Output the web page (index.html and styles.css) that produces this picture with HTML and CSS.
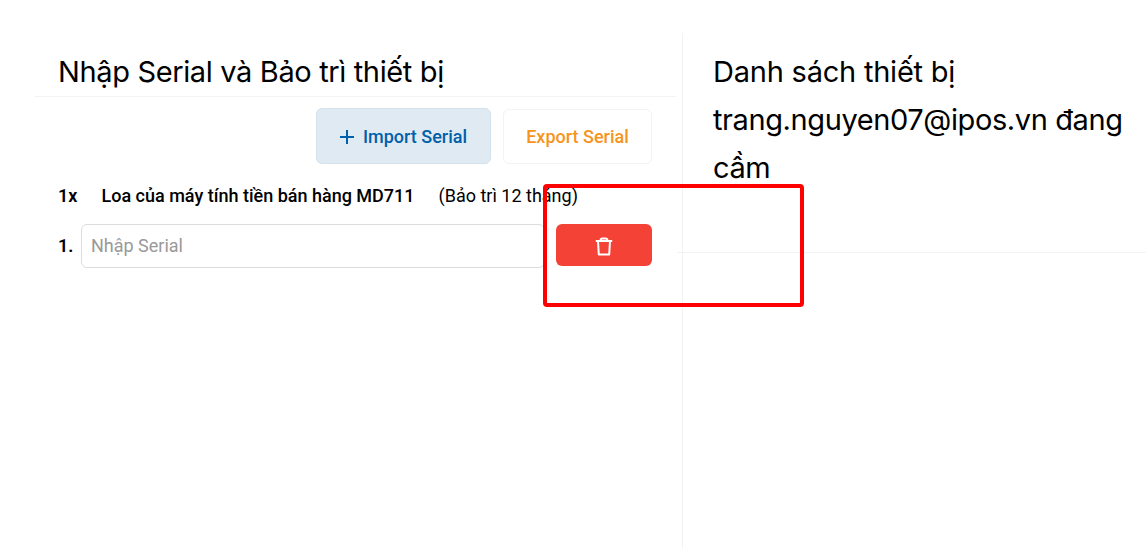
FILE: index.html
```html
<!DOCTYPE html>
<html lang="vi">
<head>
    <meta charset="UTF-8">
    <meta name="viewport" content="width=device-width, initial-scale=1.0">
    <title>Nhập Serial và Bảo trì thiết bị</title>
    <link rel="stylesheet" href="styles.css">
</head>
<body>

    <div class="page">
        <main class="serial-panel">
            <h1 class="title">Nhập Serial và Bảo trì thiết bị</h1>

            <div class="panel-body">
                <div class="actions">
                    <button class="btn btn-import">
                        <svg width="14" height="16" viewBox="0 0 14 16" fill="none" stroke="currentColor" stroke-width="2">
                            <path d="M7 2v14M0 9h14"/>
                        </svg>
                        Import Serial
                    </button>
                    <button class="btn btn-export">Export Serial</button>
                </div>

                <div class="product">
                    <b class="qty">1x</b>
                    <b class="name">Loa của máy tính tiền bán hàng MD711</b>
                    <span class="note">(Bảo trì 12 tháng)</span>
                </div>

                <div class="serial-row">
                    <b class="index">1.</b>
                    <input class="serial-input" type="text" placeholder="Nhập Serial">
                    <button class="btn-delete" aria-label="Xóa">
                        <svg width="18" height="20" viewBox="0 0 18 20" fill="none" stroke="currentColor" stroke-width="2" stroke-linejoin="round">
                            <path d="M.8 5h16.4M3 5l.8 13.5h10.4L15 5M5.6 5V4.2Q5.6 2.4 7.4 2.4h3.2q1.8 0 1.8 1.8V5"/>
                        </svg>
                    </button>
                </div>
            </div>
        </main>

        <aside class="device-panel">
            <h2 class="title device-title">
                <span class="line-1">Danh sách thiết bị</span><br>
                <span class="line-2">trang.nguyen07@ipos.vn đang</span><br>
                <span class="line-3">cầm</span>
            </h2>
        </aside>
    </div>

    <div class="highlight"></div>

</body>
</html>
```
FILE: styles.css
```css
* {
    box-sizing: border-box;
}
body {
    margin: 0;
    background: #fff;
    color: #000;
    font-family: Roboto, "Liberation Sans", sans-serif;
    font-size: 18px;
    height: 548px;
    overflow: hidden;
}
.page {
    display: flex;
    height: 548px;
    padding: 33px 0 0 35px;
}
.serial-panel {
    width: 648px;
    padding-right: 6px;
    border-right: 1px solid #f2f2f2;
}
.title {
    margin: 0;
    font-family: Inter, "Open Sans", sans-serif;
    font-size: 29px;
    font-weight: 400;
    line-height: 48px;
    white-space: nowrap;
}
.serial-panel .title {
    height: 64px;
    padding: 15px 0 0 23px;
    border-bottom: 1px solid #f3f3f3;
    letter-spacing: -0.36px;
}
.panel-body {
    padding: 11px 24px 0 23px;
}
.actions {
    display: flex;
    justify-content: flex-end;
    align-items: center;
    gap: 12px;
}
.btn {
    display: flex;
    align-items: center;
    justify-content: center;
    padding: 0;
    font-family: inherit;
    font-size: 18px;
    font-weight: 500;
    background: #fff;
    border-radius: 6px;
}
.btn-import {
    width: 175px;
    height: 56px;
    gap: 9px;
    color: #0060a9;
    background: #e0eaf3;
    border: 1px solid #d3e1ec;
}
.btn-export {
    width: 149px;
    height: 55px;
    color: #f7941d;
    border: 1px solid #f3f3f3;
}
.product {
    display: flex;
    height: 60px;
    line-height: 64px;
    white-space: nowrap;
}
.product b {
    font-weight: 500;
}
.product .qty {
    width: 43.5px;
    font-weight: 600;
}
.product .name {
    width: 337px;
}
.serial-row {
    display: flex;
}
.index {
    width: 23px;
    font-weight: 600;
    line-height: 44px;
}
.serial-input {
    width: 464px;
    height: 44px;
    margin-right: 11px;
    padding: 0 9px 2px;
    font-family: inherit;
    font-size: 18px;
    border: 1px solid #dcdcdc;
    border-radius: 6px;
}
.serial-input::placeholder {
    color: #999;
}
.btn-delete {
    display: flex;
    align-items: center;
    justify-content: center;
    width: 96px;
    height: 42px;
    padding: 1px 0 0;
    color: #fff;
    background: #f44336;
    border: none;
    border-radius: 6px;
}
.device-panel {
    flex: 1;
    margin-left: -6px;
}
.device-title {
    height: 220px;
    padding: 15px 0 0 36px;
    border-bottom: 1px solid #f3f3f3;
}
.line-1 {
    letter-spacing: -0.22px;
}
.line-2 {
    letter-spacing: -0.4px;
}
.line-3 {
    letter-spacing: -0.4px;
}
.highlight {
    position: absolute;
    left: 543px;
    top: 184px;
    width: 261px;
    height: 123px;
    border: 4px solid #f00;
    border-radius: 4px;
    pointer-events: none;
}
```
